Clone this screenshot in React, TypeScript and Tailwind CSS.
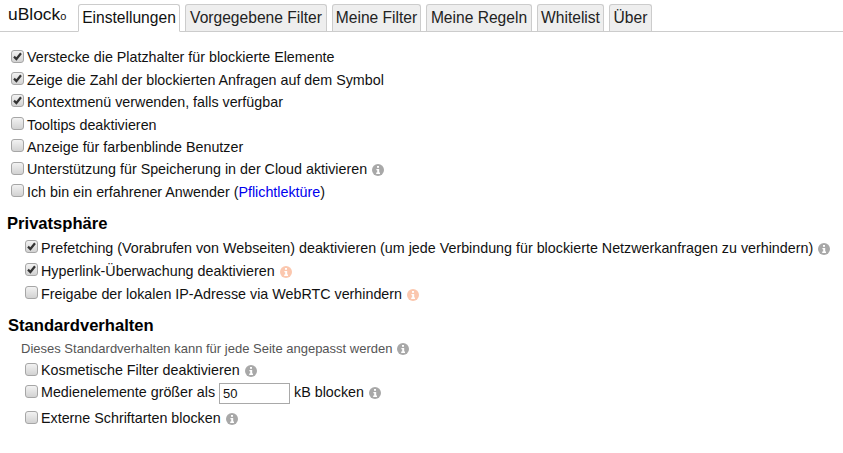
import React from "react";

function Info({ tone = "gray" }: { tone?: "gray" | "orange" }) {
  const fill = tone === "gray" ? "#a8a8a8" : "#fbc7ae";
  return (
    <svg viewBox="0 0 12 12" className="inline-block w-3 h-3 ml-[1px] align-[-2px]">
      <circle cx="6" cy="6" r="6" fill={fill} />
      <rect x="5" y="2" width="2" height="1.8" fill="#fff" />
      <path d="M4.4 5h2.8v3.6h.8V10H4.2V8.6h1V6.2h-.8z" fill="#fff" />
    </svg>
  );
}

function Box({ checked = false }: { checked?: boolean }) {
  return (
    <span className="shrink-0 w-[13px] h-[13px] mr-[3px] -mt-[3px] rounded-[3px] border border-[#a6a6a6] bg-gradient-to-b from-[#f2f2f2] to-[#d2d2d2] flex items-center justify-center">
      {checked && (
        <svg viewBox="0 0 11 11" className="w-[11px] h-[11px]">
          <path d="M2 5.6 4.4 8 9 2.2" fill="none" stroke="#333" strokeWidth="2.2" />
        </svg>
      )}
    </span>
  );
}

function Row({ checked, className = "", children }: { checked?: boolean; className?: string; children: React.ReactNode }) {
  return (
    <div className={`flex items-center whitespace-nowrap ${className}`}>
      <Box checked={checked} />
      <span className="flex-none">{children}</span>
    </div>
  );
}

const tabs: [string, string][] = [
  ["Vorgegebene Filter", "w-[142px]"],
  ["Meine Filter", "w-[89px]"],
  ["Meine Regeln", "w-[106px]"],
  ["Whitelist", "w-[67px]"],
  ["Über", "w-[43px]"],
];

export default function App() {
  return (
    <div className="w-[843px] h-[453px] overflow-hidden bg-white text-[14.3px] text-[#111] font-['Liberation_Sans',Arial,sans-serif]">
      <nav className="h-[32px] flex items-end border-b border-[#ccc] pl-[8px] text-[15.6px] leading-[26px]">
        <span className="w-[70px] self-center text-[17.4px] -mt-[1px]">
          uBlock<span className="text-[11px]">o</span>
        </span>
        <span className="relative top-px h-[28px] w-[102px] mr-[5px] text-center bg-white border border-[#ccc] border-b-white rounded-t-[3px]">Einstellungen</span>
        {tabs.map(([t, w]) => (
          <span key={t} className={`${w} h-[27px] mr-[5px] text-center bg-[#eee] border border-[#ccc] border-b-0 rounded-t-[3px] text-[#222]`}>
            {t}
          </span>
        ))}
      </nav>

      <section className="pl-[11px] pt-[14.3px] leading-[22.4px]">
        <Row checked>Verstecke die Platzhalter für blockierte Elemente</Row>
        <Row checked>Zeige die Zahl der blockierten Anfragen auf dem Symbol</Row>
        <Row checked>Kontextmenü verwenden, falls verfügbar</Row>
        <Row>Tooltips deaktivieren</Row>
        <Row>Anzeige für farbenblinde Benutzer</Row>
        <Row>Unterstützung für Speicherung in der Cloud aktivieren <Info /></Row>
        <Row>Ich bin ein erfahrener Anwender (<span className="text-[#0000ee]">Pflichtlektüre</span>)</Row>
      </section>

      <h2 className="pl-[7px] mt-[9.4px] text-[16.6px] leading-[22px] font-bold text-[#000]">Privatsphäre</h2>
      <section className="pl-[25px] mt-[2.3px] leading-[23px]">
        <Row checked>Prefetching (Vorabrufen von Webseiten) deaktivieren (um jede Verbindung für blockierte Netzwerkanfragen zu verhindern) <Info /></Row>
        <Row checked>Hyperlink-Überwachung deaktivieren <Info tone="orange" /></Row>
        <Row>Freigabe der lokalen IP-Adresse via WebRTC verhindern <Info tone="orange" /></Row>
      </section>

      <h2 className="pl-[8px] mt-[9px] text-[16.6px] leading-[22px] font-bold text-[#000]">Standardverhalten</h2>
      <p className="pl-[21px] mt-[1px] text-[13px] leading-[22px] text-[#555]">
        Dieses Standardverhalten kann für jede Seite angepasst werden <Info />
      </p>
      <section className="pl-[25px]">
        <Row className="h-[22px]">Kosmetische Filter deaktivieren <Info /></Row>
        <Row className="h-[23px]">
          Medienelemente größer als
          <input
            readOnly
            value="50"
            className="w-[71px] h-[21px] mx-[4px] px-[3px] border border-[#a9a9a9] text-[13px] align-middle outline-none"
          />
          kB blocken <Info />
        </Row>
        <Row className="h-[28px]">Externe Schriftarten blocken <Info /></Row>
      </section>
    </div>
  );
}
